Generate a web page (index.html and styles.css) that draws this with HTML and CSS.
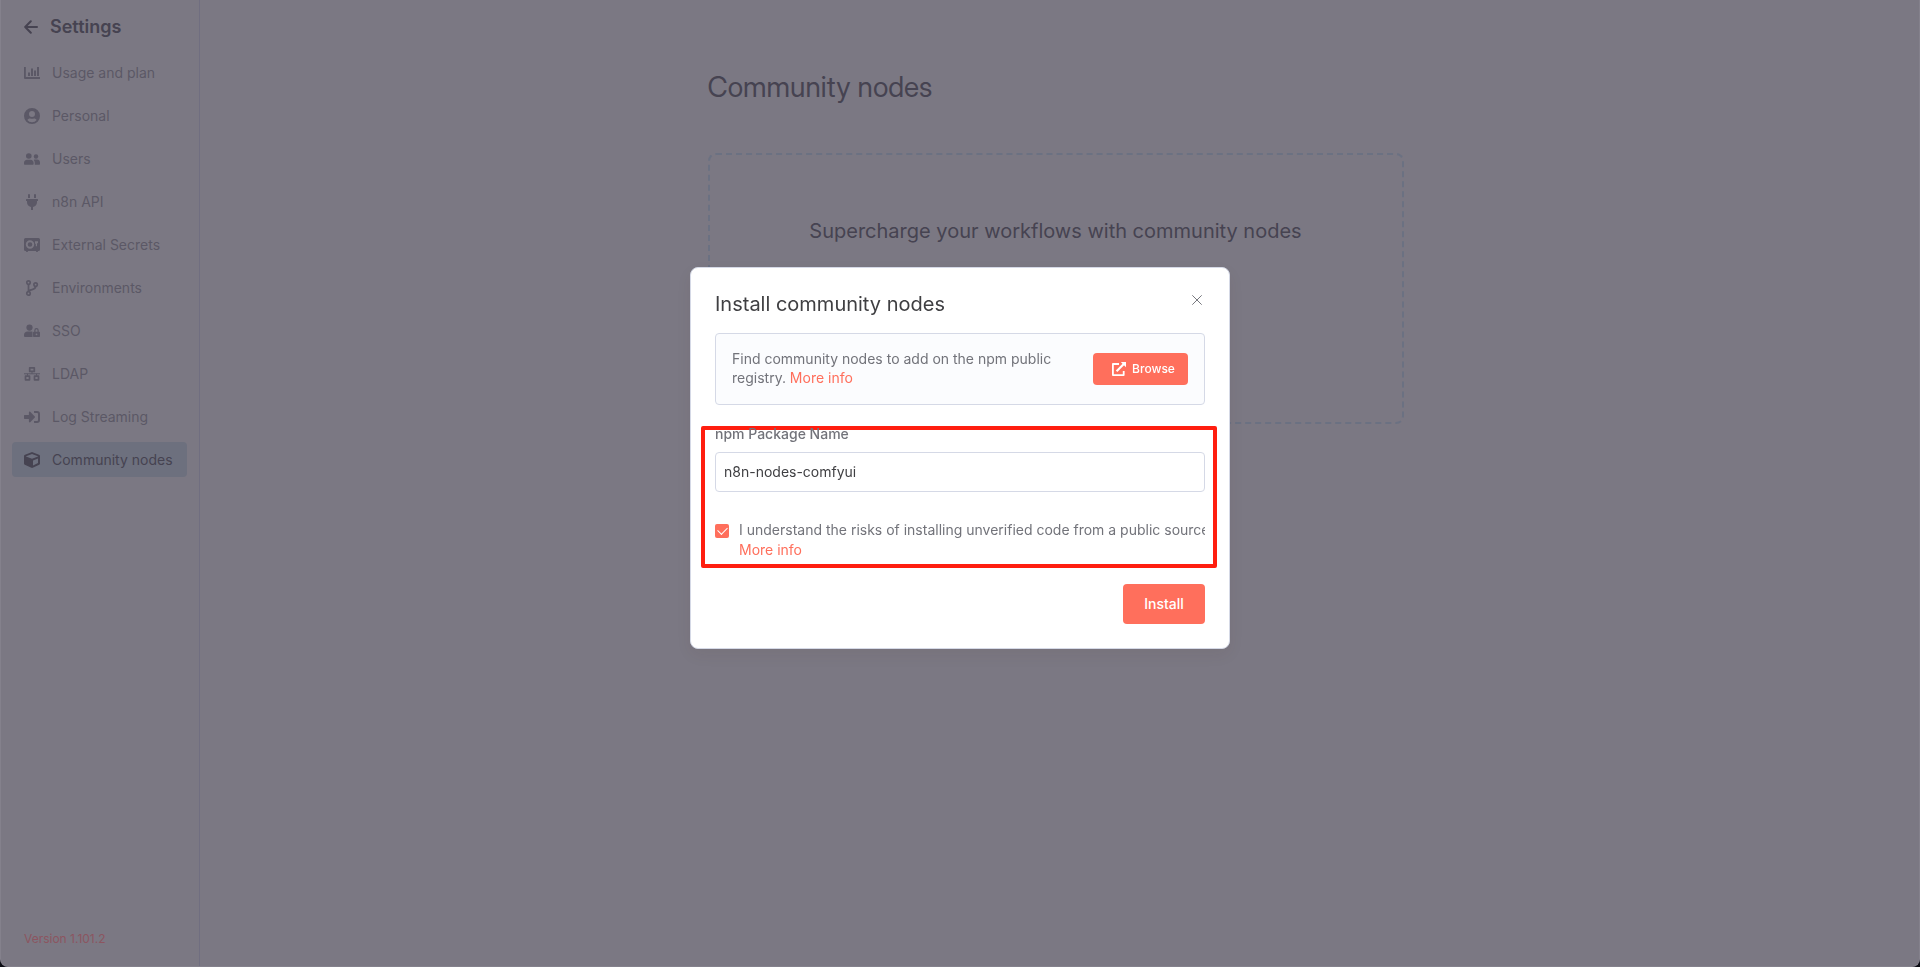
FILE: index.html
```html
<!DOCTYPE html>
<html lang="en">
<head>
  <meta charset="UTF-8">
  <title>Community nodes</title>
  <link rel="stylesheet" href="styles.css">
</head>
<body>
<div id="app">
  <aside class="sidebar">
    <a href="#" class="back">
      <svg width="14" height="14" viewBox="0 0 14 14" fill="none" stroke="currentColor" stroke-width="2" stroke-linecap="round" stroke-linejoin="round"><path d="M13 7H1.3M6.8 1.2L1.2 7l5.600 5.800"/></svg>
      <span>Settings</span>
    </a>
    <nav class="menu">
      <a href="#"><svg class="icon" viewBox="0 0 16 16" fill="currentColor"><path d="M0 2h1.800v10H16v2H1a1 1 0 0 1-1-1zM4 7.500h2V11H4zM7 3.500h2V11H7zM10 5.500h2V11h-2zM13 2h2v9h-2z"/></svg>Usage and plan</a>
      <a href="#"><svg class="icon" viewBox="0 0 16 16" fill="currentColor" fill-rule="evenodd"><path d="M8 0a8 8 0 1 0 0 16A8 8 0 0 0 8 0zm0 3a3 3 0 1 1 0 6 3 3 0 0 1 0-6zm0 11.200a6 6 0 0 1-4.700-2.200c.5-1 1.500-1.600 2.700-1.600.5 0 1 .3 2 .3s1.500-.3 2-.3c1.200 0 2.200.6 2.700 1.600A6 6 0 0 1 8 14.200z"/></svg>Personal</a>
      <a href="#"><svg class="icon" viewBox="0 0 16 16" fill="currentColor"><circle cx="4.800" cy="5" r="2.800"/><circle cx="12" cy="5.500" r="2.200"/><path d="M0 13v-1.200C0 10 1.300 8.700 3 8.700h3.600c1.700 0 3 1.300 3 3.100V13a.7.7 0 0 1-.7.700H.7A.7.7 0 0 1 0 13zM10.800 13.700V12c0-1.300-.4-2.300-1.100-3 .4-.3.900-.4 1.400-.4h2c1.600 0 2.900 1.300 2.900 2.900V13c0 .4-.3.700-.7.700z"/></svg>Users</a>
      <a href="#"><svg class="icon" viewBox="0 0 16 16" fill="currentColor"><path d="M4 1a1 1 0 0 1 2 0v3H4zM10 1a1 1 0 0 1 2 0v3h-2zM2.500 5h11a.5.5 0 0 1 .5.5v1a.5.5 0 0 1-.5.5H13v1a5 5 0 0 1-4 4.900V16H7v-3.100A5 5 0 0 1 3 8V7h-.5a.5.5 0 0 1-.5-.5v-1a.5.5 0 0 1 .5-.5z"/></svg>n8n API</a>
      <a href="#"><svg class="icon" viewBox="0 0 16 16" fill="currentColor" fill-rule="evenodd"><path d="M1.500 1h13A1.500 1.500 0 0 1 16 2.500v10a1.500 1.500 0 0 1-1.500 1.500H14l-.3 1h-1.400l-.3-1H4l-.3 1H2.300L2 14h-.5A1.500 1.500 0 0 1 0 12.500v-10A1.500 1.500 0 0 1 1.500 1zM6 3.300a4.200 4.200 0 1 0 0 8.400 4.200 4.200 0 0 0 0-8.400zm0 1.900a2.300 2.300 0 1 1 0 4.600 2.300 2.300 0 0 1 0-4.600zM11 4.200h3v2h-1v3h-1.200V6.800H11z"/></svg>External Secrets</a>
      <a href="#"><svg class="icon" viewBox="0 0 16 16" fill="none" stroke="currentColor" stroke-width="1.700"><circle cx="4.500" cy="2.600" r="1.700"/><circle cx="4.500" cy="13.400" r="1.700"/><circle cx="11.600" cy="4.600" r="1.700"/><path d="M4.500 4.300v7.400M11.600 6.300c0 4-3.600 2.700-6.600 4.400"/></svg>Environments</a>
      <a href="#"><svg class="icon" viewBox="0 0 16 16" fill="currentColor" fill-rule="evenodd"><circle cx="5.500" cy="4.600" r="3.100"/><path d="M0 13v-1c0-2 1.500-3.500 3.500-3.500h4c.3 0 .7 0 1 .2V14H1a1 1 0 0 1-1-1zM9.800 8.700h.5V7.200a2.200 2.200 0 0 1 4.400 0v1.500h.5c.4 0 .8.4.8.800v3.700c0 .4-.4.800-.8.800H9.800a.8.800 0 0 1-.8-.8V9.500c0-.4.4-.8.800-.8zm1.700 0h2V7.200a1 1 0 0 0-2 0zm1 1.700a.9.900 0 1 0 0 1.800.9.900 0 0 0 0-1.800z"/></svg>SSO</a>
      <a href="#"><svg class="icon" viewBox="0 0 16 16" fill="none" stroke="currentColor" stroke-width="1.700" stroke-linejoin="round"><rect x="5.700" y="1.800" width="4.600" height="3.600"/><rect x="1.500" y="10.200" width="4" height="3.600"/><rect x="10.500" y="10.200" width="4" height="3.600"/><path stroke-width="1" d="M0 7.800h16M8 5.500v2.300M3.500 7.800v2M12.500 7.800v2"/></svg>LDAP</a>
      <a href="#"><svg class="icon" viewBox="0 0 16 16" fill="currentColor"><path d="M0 6.600c0-.4.300-.7.700-.7h4.200V3.300c0-.7.800-1 1.300-.6l4.600 4.700c.3.300.3.800 0 1.100l-4.600 4.700c-.5.500-1.300.1-1.300-.6V10H.7a.7.700 0 0 1-.7-.7zM10.400 14c-.2 0-.4-.2-.4-.4v-1.200c0-.2.200-.4.400-.4H13c.5 0 1-.4 1-1V5c0-.5-.4-1-1-1h-2.600c-.2 0-.4-.2-.4-.4V2.400c0-.2.200-.4.400-.4H13a3 3 0 0 1 3 3v6a3 3 0 0 1-3 3z"/></svg>Log Streaming</a>
      <a href="#" class="active"><svg class="icon" viewBox="0 0 16 16" fill="currentColor" fill-rule="evenodd"><path d="M7.500.2a1.500 1.500 0 0 1 1 0l6.500 2.500c.6.200 1 .8 1 1.400v7.300c0 .6-.3 1.100-.8 1.300l-6.500 3.100c-.4.200-.9.200-1.300 0L.8 12.700c-.5-.2-.8-.7-.8-1.300V4.100c0-.6.400-1.200 1-1.400zM8 2.100L2 4.300v.1l6 2.400 6-2.400v-.1zM9 13.500l5-2.400V6.500L9 8.600z"/></svg>Community nodes</a>
    </nav>
    <a href="#" class="version">Version 1.101.2</a>
  </aside>
  <main>
    <div class="content">
      <h1>Community nodes</h1>
      <div class="empty">Supercharge your workflows with community nodes</div>
    </div>
  </main>
</div>

<div class="overlay">
  <div class="modal" role="dialog" aria-labelledby="modal-title">
    <div class="modal-head">
      <h2 id="modal-title">Install community nodes</h2>
      <button type="button" class="close" aria-label="Close"><svg width="10" height="10" viewBox="0 0 10 10" fill="none" stroke="currentColor"><path d="M.3.3l9.400 9.400M9.700.3L.3 9.700"/></svg></button>
    </div>
    <div class="notice">
      <p>Find community nodes to add on the npm public registry. <a href="#">More info</a></p>
      <button type="button" class="btn browse"><svg width="14" height="14" viewBox="0 0 14 14" fill="none" stroke="currentColor"><path stroke-width="1.800" stroke-linejoin="round" d="M7 2H.9v11.100h10.800V9"/><path stroke-width="2.200" d="M4.600 9.200L12 1.800"/><path fill="currentColor" stroke="none" d="M8.800 0H14v5.200z"/></svg>Browse</button>
    </div>
    <form action="#">
      <div class="marked">
        <label class="name" for="package">npm Package Name</label>
        <input type="text" id="package" value="n8n-nodes-comfyui">
        <div class="agree">
          <input type="checkbox" id="agree" checked>
          <div class="agree-text">
            <label for="agree">I understand the risks of installing unverified code from a public source.</label>
            <a href="#">More info</a>
          </div>
        </div>
      </div>
      <div class="actions"><button type="submit" class="btn install">Install</button></div>
    </form>
  </div>
</div>
</body>
</html>
```
FILE: styles.css
```css
*{margin:0;padding:0;box-sizing:border-box;}
html{background:#0c0c14;}
body{
  color:#464351;
  font-family:Inter,"Open Sans",sans-serif;
  font-size:14px;
  line-height:20px;
}
a{color:#ff6f5c;text-decoration:none;}
button,input{font-family:inherit;font-size:14px;}
button{border:0;cursor:pointer;}
#app{
  display:flex;
  min-height:100vh;
  background:#7b7883;
  border:1px solid #84818c;
  border-top:0;
  border-radius:0 0 8px 8px;
}

/* sidebar */
.sidebar{
  display:flex;
  flex-direction:column;
  width:199px;
  border-right:1px solid #706e80;
}
.back{
  display:flex;
  align-items:center;
  gap:12px;
  padding:15px 23px 16px;
  color:#464351;
  font-size:18px;
  font-weight:600;
  line-height:24px;
}
.menu{
  display:flex;
  flex-direction:column;
  gap:8px;
  padding:0 12px 0 11px;
}
.menu a{
  display:flex;
  align-items:center;
  gap:12px;
  height:35px;
  padding:0 12px;
  border-radius:4px;
  color:#5b5866;
  white-space:nowrap;
}
.menu .active{background:#6d707e;color:#464351;}
.icon{width:16px;height:16px;flex:none;}
.version{
  margin-top:auto;
  padding:0 23px 17px;
  color:#8c5560;
  font-size:12px;
}

/* page behind the dialog */
main{flex:1;padding:64px 8px 0 0;}
.content{max-width:696px;margin:0 auto;}
h1,h2,.empty{
  font-family:"Inter Variable",Inter,"Open Sans",sans-serif;
  font-optical-sizing:auto;
  font-weight:400;
}
h1{
  font-family:"Inter Variable","Inter Display",Inter,"Open Sans",sans-serif;
  font-size:28px;
  line-height:46px;
}
.empty{
  height:271px;
  margin-top:43px;
  padding-top:64px;
  border:2px dashed #6b7182;
  border-radius:8px;
  font-size:20px;
  line-height:24px;
  text-align:center;
}

/* install dialog */
.overlay{
  position:fixed;
  top:0;
  right:0;
  bottom:0;
  left:0;
  padding-top:267px;
}
.modal{
  width:540px;
  margin:0 auto;
  padding:24px;
  background:#fff;
  border:1px solid #d5d9e6;
  border-radius:8px;
  box-shadow:0 6px 16px rgba(68,28,23,.06);
}
.modal-head{
  display:flex;
  justify-content:space-between;
  height:41px;
}
h2{color:#3f3f42;font-size:20px;line-height:24px;}
.close{
  display:flex;
  align-items:center;
  justify-content:center;
  width:16px;
  height:16px;
  background:none;
  color:#77787e;
}
.notice{
  display:flex;
  align-items:center;
  justify-content:space-between;
  height:72px;
  padding:0 16px;
  background:#fbfcfe;
  border:1px solid #d5d9e6;
  border-radius:4px;
  color:#72737a;
}
.notice p{width:330px;padding-bottom:2px;line-height:19px;}
.btn{
  display:flex;
  align-items:center;
  justify-content:center;
  padding-bottom:1px;
  background:#ff6f5c;
  border-radius:4px;
  color:#fff;
  font-weight:500;
}
.browse{gap:6px;width:95px;height:32px;padding-left:6px;font-size:12px;}
.marked{
  height:142px;
  margin:21px -12px 0 -14px;
  padding:0 8px 0 10px;
  border:4px solid #ff1e0f;
  border-radius:2px;
}
.name{
  display:block;
  height:22px;
  line-height:8px;
  color:#72737a;
  font-weight:500;
}
#package{
  display:block;
  width:100%;
  height:40px;
  padding:0 8px 2px;
  background:#fff;
  border:1px solid #d5d9e6;
  border-radius:4px;
  color:#3f3f42;
}
.agree{display:flex;gap:10px;margin-top:28px;color:#72737a;}
#agree{
  appearance:none;
  flex:none;
  width:14px;
  height:14px;
  margin-top:4px;
  background:#ff6f5c;
  border-radius:2px;
}
#agree:checked::before{
  content:"";
  display:block;
  width:8px;
  height:5px;
  margin:4px 3px;
  border:solid #fff;
  border-width:0 0 1px 1px;
  transform:rotate(-45deg) translate(1px,-1px);
}
.agree-text{overflow:hidden;white-space:nowrap;}
.agree-text label,.agree-text a{display:block;}
.actions{display:flex;justify-content:flex-end;margin-top:16px;}
.install{width:82px;height:40px;}
```
